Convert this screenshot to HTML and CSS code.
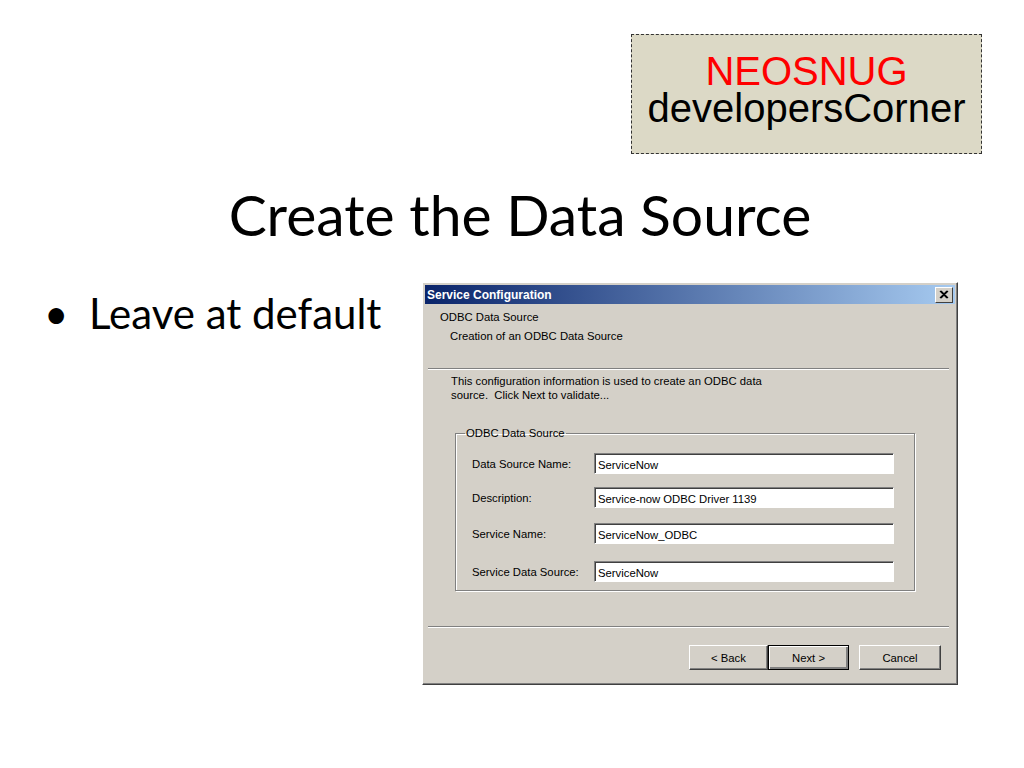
FILE: index.html
```html
<!DOCTYPE html>
<html lang="en">
<head>
  <meta charset="UTF-8" />
  <title>Create the Data Source</title>
  <link rel="stylesheet" href="styles.css">
</head>
<body>
  <div class="slide">
    <div class="top">
      <div class="badge">
        <div class="brand">NEOSNUG</div>
        <div class="corner">developersCorner</div>
      </div>
    </div>

    <h1 class="title">Create the Data Source</h1>

    <div class="content">
      <ul class="bullets">
        <li>Leave at default</li>
      </ul>

      <div class="dialog">
        <div class="titlebar">
          <span>Service Configuration</span>
          <span class="close">
            <svg width="10" height="9" viewBox="0 0 10 9"><path d="M1 1 L8 8 M2 1 L9 8 M8 1 L1 8 M9 1 L2 8" stroke="#000" stroke-width="1.2"/></svg>
          </span>
        </div>
        <div class="head">
          <div class="head-title">ODBC Data Source</div>
          <div class="head-sub">Creation of an ODBC Data Source</div>
        </div>
        <div class="sep"></div>
        <div class="body">
          <p class="info">This configuration information is used to create an ODBC data<br>source.&nbsp; Click Next to validate...</p>
          <fieldset class="group">
            <legend>ODBC Data Source</legend>
            <div class="row"><label>Data Source Name:</label><div class="field">ServiceNow</div></div>
            <div class="row"><label>Description:</label><div class="field">Service-now ODBC Driver 1139</div></div>
            <div class="row"><label>Service Name:</label><div class="field">ServiceNow_ODBC</div></div>
            <div class="row"><label>Service Data Source:</label><div class="field">ServiceNow</div></div>
          </fieldset>
        </div>
        <div class="sep bottom-sep"></div>
        <div class="buttons">
          <button>&lt; Back</button>
          <button class="default">Next &gt;</button>
          <button class="cancel">Cancel</button>
        </div>
      </div>
    </div>
  </div>
</body>
</html>
```

FILE: styles.css
```css
body {
  margin: 0;
  background: #fff;
}
.slide {
  width: 1024px;
  height: 768px;
  overflow: hidden;
}
.top {
  display: flex;
  justify-content: flex-end;
  padding: 34px 42px 0 0;
}
.badge {
  width: 351px;
  height: 120px;
  background: #dcd9c6;
  border: 1px dashed #333;
  font-family: "Liberation Sans", Arial, sans-serif;
  font-size: 40px;
  text-align: center;
  line-height: 37px;
  padding-top: 18px;
  box-sizing: border-box;
}
.brand {
  color: #f00;
}
.corner {
  color: #000;
}
.title {
  font-family: Lato, "Open Sans", sans-serif;
  font-weight: normal;
  font-size: 57px;
  text-align: center;
  margin: 25px 0 0 16px;
  line-height: 70px;
  color: #000;
}
.content {
  display: flex;
  margin-top: 33px;
}
.bullets {
  list-style: none;
  margin: 0;
  padding: 6px 0 0 44px;
  width: 378px;
  font-family: Lato, "Open Sans", sans-serif;
  font-size: 42px;
}
.bullets li::before {
  content: "\2022";
  display: inline-block;
  width: 45px;
}
.dialog {
  width: 536px;
  height: 403px;
  background: #d4d0c8;
  border: 1px solid;
  border-color: #fff #404040 #404040 #fff;
  box-shadow: inset -1px -1px #808080;
  box-sizing: border-box;
  font-family: "Liberation Sans", Tahoma, sans-serif;
  font-size: 11.3px;
  color: #000;
  display: flex;
  flex-direction: column;
}
.titlebar {
  margin: 2px 2px 0 2px;
  height: 19px;
  background: linear-gradient(to right, #0a246a, #a6caf0);
  color: #fff;
  font-weight: bold;
  font-size: 12px;
  display: flex;
  align-items: center;
  justify-content: space-between;
  padding-left: 2px;
}
.close {
  width: 16px;
  height: 14px;
  margin-right: 2px;
  background: #d4d0c8;
  border: 1px solid;
  border-color: #fff #404040 #404040 #fff;
  display: flex;
  align-items: center;
  justify-content: center;
}
.head {
  padding: 7px 0 0 17px;
  height: 58px;
  box-sizing: border-box;
}
.head-sub {
  margin: 7px 0 0 10px;
}
.sep {
  margin: 6px 8px 0 5px;
  border-top: 1px solid #808080;
  border-bottom: 1px solid #fff;
}
.body {
  padding: 4px 0 0 28px;
  height: 252px;
}
.info {
  margin: 0;
  line-height: 14px;
}
.group {
  margin: 25px 0 0 4px;
  width: 460px;
  height: 164px;
  box-sizing: border-box;
  border: 1px solid #808080;
  box-shadow: 1px 1px #fff, inset 1px 1px #fff;
  padding: 14px 20px 0 16px;
}
.group legend {
  padding: 0 1px;
  margin-left: -7px;
}
.row {
  display: flex;
  align-items: center;
  height: 21px;
  margin-bottom: 13px;
}
.row:nth-of-type(2) {
  margin-bottom: 15px;
}
.row:nth-of-type(3) {
  margin-bottom: 17px;
}
.row label {
  width: 122px;
}
.field {
  width: 300px;
  height: 21px;
  box-sizing: border-box;
  background: #fff;
  border: 1px solid;
  border-color: #808080 #fff #fff #808080;
  box-shadow: inset 1px 1px #404040;
  padding: 4px 0 0 3px;
  line-height: 14px;
}
.bottom-sep {
  margin-top: 0;
}
.buttons {
  display: flex;
  justify-content: flex-end;
  padding: 17px 16px 0 0;
}
.buttons button {
  width: 79px;
  height: 25px;
  background: #d4d0c8;
  font-family: "Liberation Sans", Tahoma, sans-serif;
  font-size: 11.3px;
  color: #000;
  border: 1px solid;
  border-color: #fff #404040 #404040 #fff;
  box-shadow: inset -1px -1px #808080;
  padding: 0;
}
.buttons button.default {
  width: 81px;
  border: 1px solid #000;
  box-shadow: inset 1px 1px #fff, inset -2px -2px #808080;
}
.buttons button.cancel {
  width: 82px;
  margin-left: 10px;
}
```
